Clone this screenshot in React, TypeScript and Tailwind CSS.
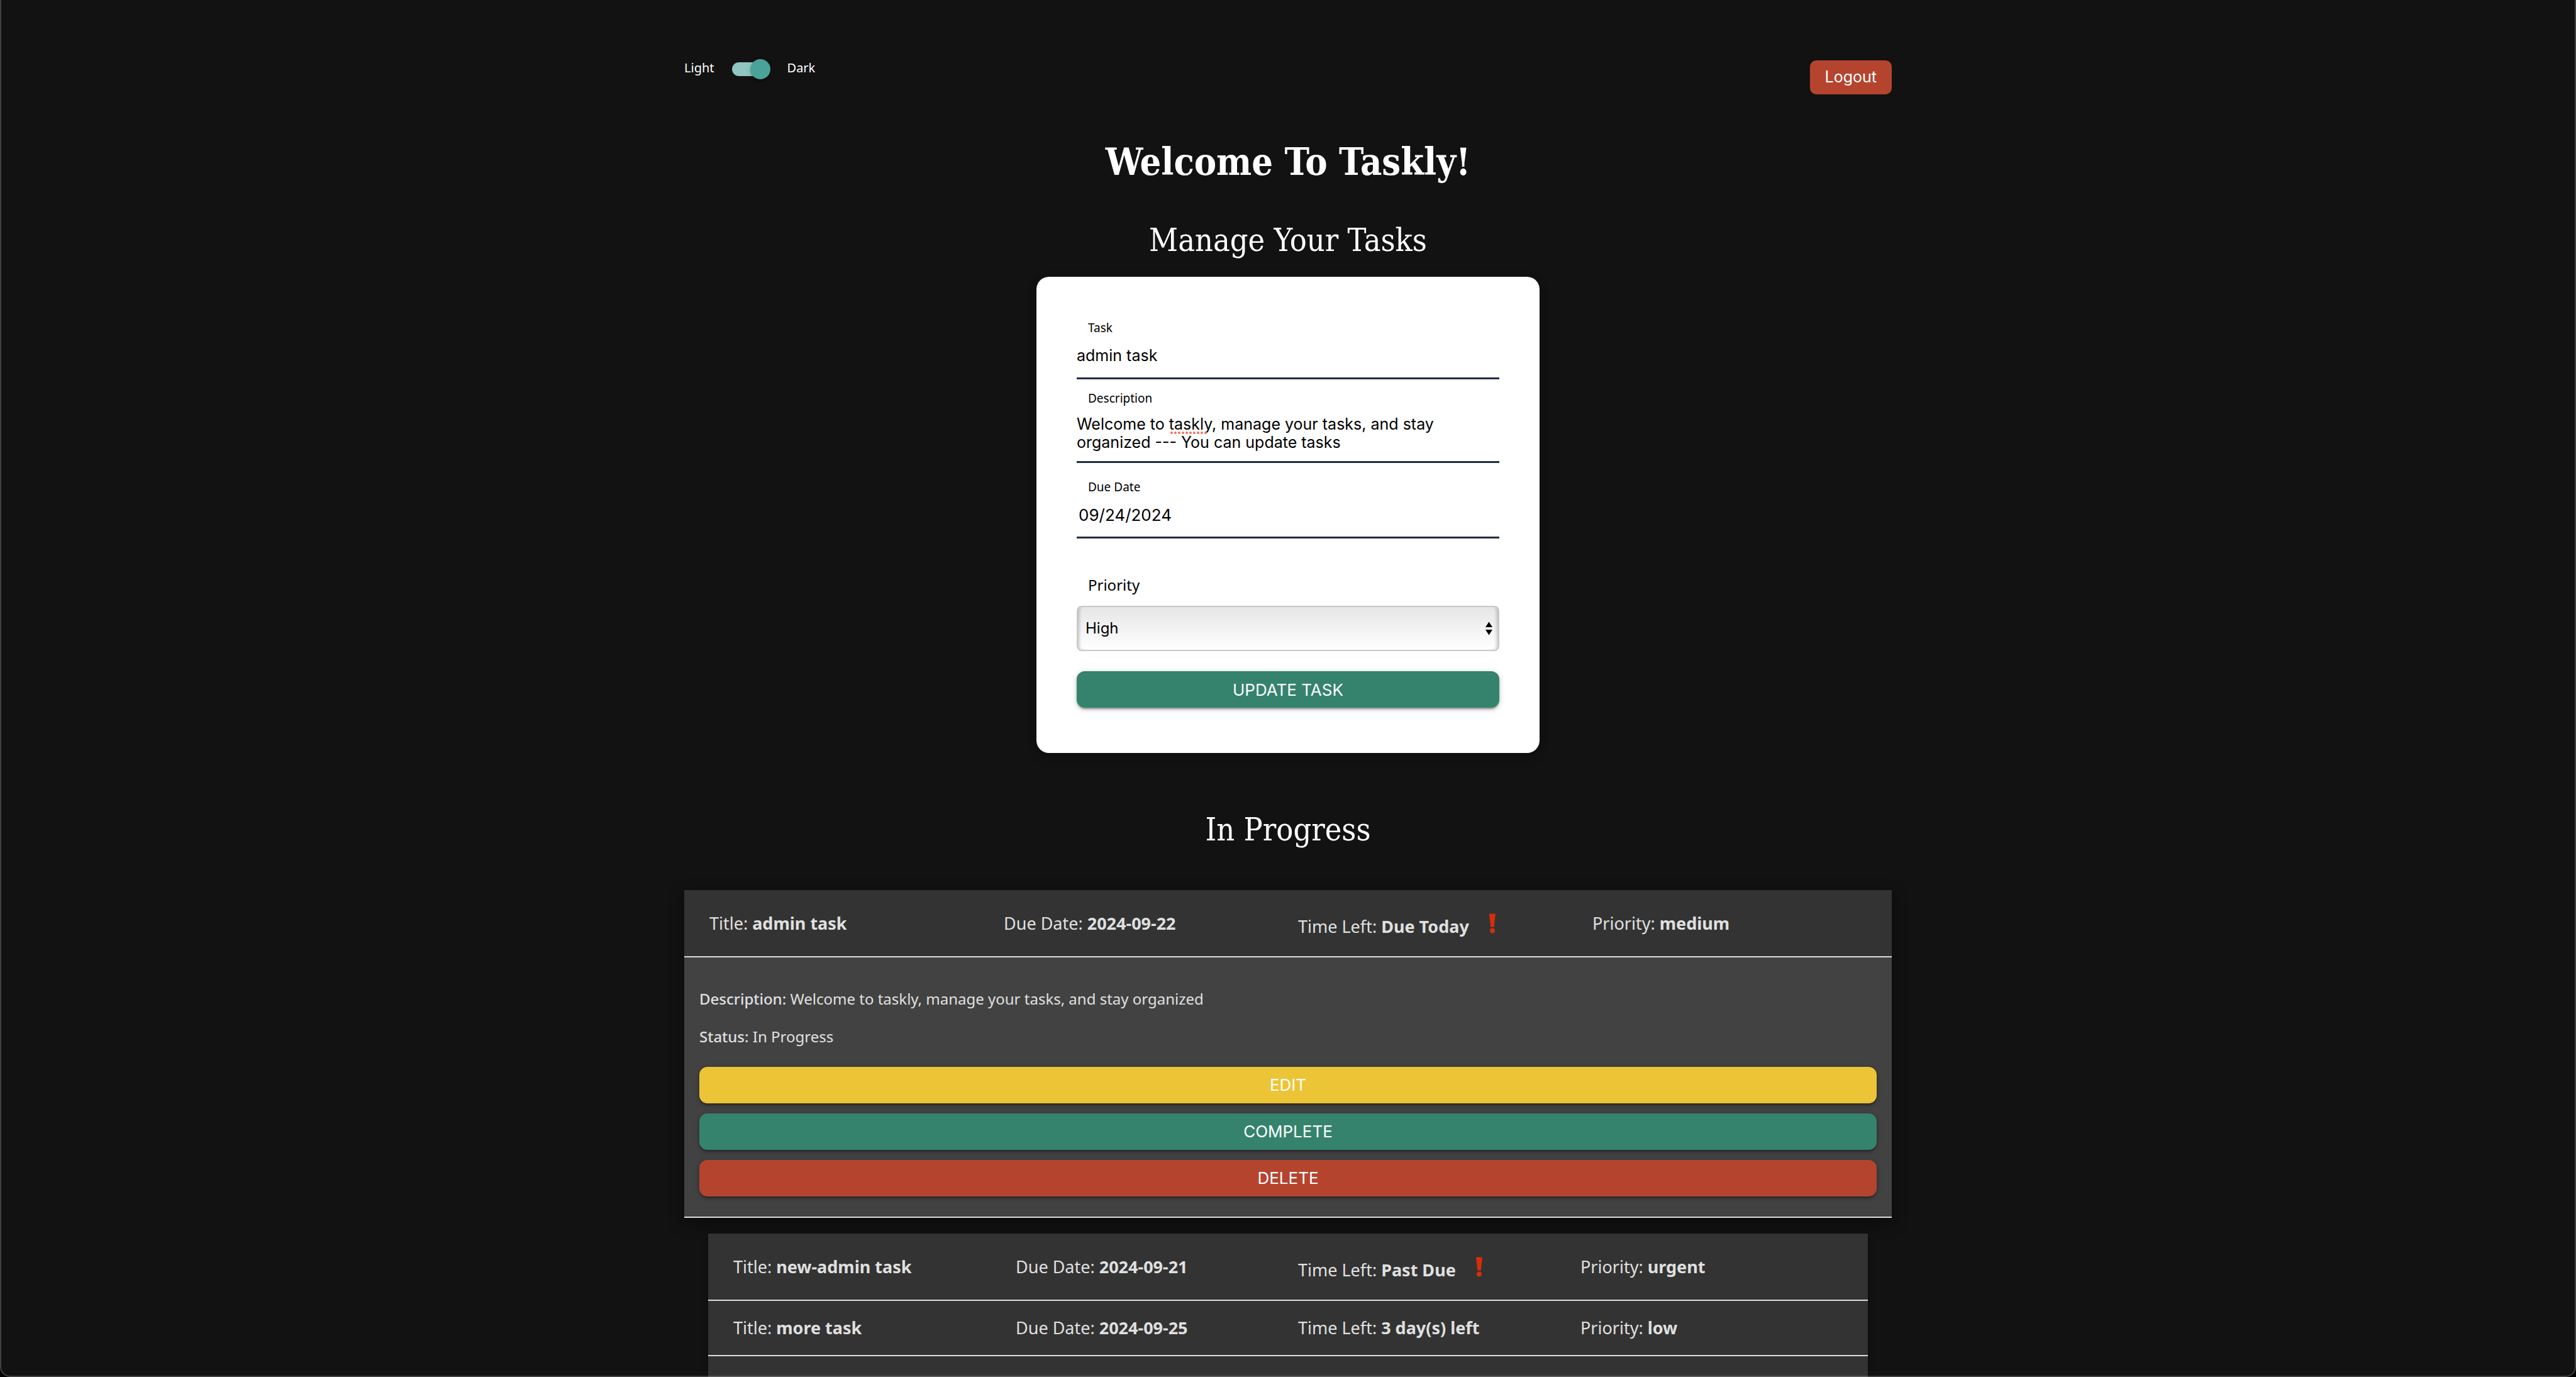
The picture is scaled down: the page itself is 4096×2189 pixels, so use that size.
import type { ReactNode } from "react";

const raised =
  "shadow-[0_3px_3px_rgba(0,0,0,0.16),0_5px_2px_-3px_rgba(0,0,0,0.14),0_2px_8px_rgba(0,0,0,0.24)]";

function BigButton({ tone, children }: { tone: string; children: ReactNode }) {
  return (
    <button
      type="button"
      className={`h-[58px] w-full rounded-[13px] text-center font-['Inter',sans-serif] text-[26px] uppercase text-white ${raised} ${tone}`}
    >
      {children}
    </button>
  );
}

function Alert() {
  return (
    <svg viewBox="0 0 10 32" className="ml-8 h-8 w-2.5 shrink-0" fill="#d62d0b" role="img" aria-label="Attention">
      <path d="M0 0.5H10L7.7 21.8H2.3Z" />
      <circle cx="5" cy="27.5" r="4" />
    </svg>
  );
}

type Task = { title: string; due: string; left: string; priority: string; alert?: boolean };

function TaskHeader({ task }: { task: Task }) {
  return (
    <div className="grid grid-cols-4 items-center border-b-2 border-[#dddddd] bg-[#333333] px-6 py-6 text-[27px] leading-[38px] whitespace-nowrap">
      <div className="px-4">
        Title: <b>{task.title}</b>
      </div>
      <div className="px-4">
        Due Date: <b>{task.due}</b>
      </div>
      {task.alert ? (
        <div className="flex h-[57px] items-center px-4">
          <span className="pt-2.5">
            Time Left: <b>{task.left}</b>
          </span>
          <Alert />
        </div>
      ) : (
        <div className="px-4">
          Time Left: <b>{task.left}</b>
        </div>
      )}
      <div className="px-4">
        Priority: <b>{task.priority}</b>
      </div>
    </div>
  );
}

const openTask: Task = { title: "admin task", due: "2024-09-22", left: "Due Today", priority: "medium", alert: true };
const otherTasks: Task[] = [
  { title: "new-admin task", due: "2024-09-21", left: "Past Due", priority: "urgent", alert: true },
  { title: "more task", due: "2024-09-25", left: "3 day(s) left", priority: "low" },
];

const slab = "font-['Roboto_Slab','DejaVu_Serif_Condensed','DejaVu_Serif',serif]";

export default function App() {
  return (
    <div className="h-screen bg-black">
      <div className="relative flex h-full flex-col overflow-hidden rounded-b-[16px] bg-[#121212] font-['Noto_Sans',sans-serif] text-white">
        <main className="mx-auto flex min-h-0 w-full max-w-[1920px] flex-1 flex-col pt-24">
          <header className="flex items-start justify-between">
            <label className="flex items-center text-[20px] leading-8">
              <span className="-mt-1">Light</span>
              <input
                type="checkbox"
                role="switch"
                defaultChecked
                className="relative mr-[30px] ml-7 h-[22px] w-[58px] appearance-none rounded-full bg-[#90c5c0] before:absolute before:-top-[5px] before:left-[29px] before:size-8 before:rounded-full before:bg-[#4aa399] before:shadow-[0_5px_2px_-3px_rgba(0,0,0,0.2),0_3px_3px_rgba(0,0,0,0.14),0_2px_8px_rgba(0,0,0,0.12)]"
              />
              <span className="-mt-1">Dark</span>
            </label>
            <button
              type="button"
              className="h-[54px] rounded-[10px] bg-[#b5442f] px-6 font-['Inter',sans-serif] text-[25px]"
            >
              Logout
            </button>
          </header>

          <h1 className={`mt-[68px] text-center text-[59px] leading-[80px] font-bold ${slab}`}>Welcome To Taskly!</h1>
          <h2 className={`mt-[54px] text-center text-[50px] leading-[60px] ${slab}`}>Manage Your Tasks</h2>

          <form className="mx-auto mt-7 w-[800px] rounded-[20px] bg-white px-16 pt-[68px] pb-[72px] text-black shadow-[0_6px_16px_rgba(0,0,0,0.3)]">
            <label htmlFor="task" className="block px-[18px] text-[19px] leading-[26px]">
              Task
            </label>
            <input
              id="task"
              defaultValue="admin task"
              className="block h-[69px] w-full border-b-[3px] border-[#202b40] pb-1 font-['Inter',sans-serif] text-[25px] outline-none"
            />
            <label htmlFor="description" className="mt-[17px] block px-[18px] text-[19px] leading-[26px]">
              Description
            </label>
            <div className="relative">
              <textarea
                id="description"
                spellCheck={false}
                defaultValue="Welcome to taskly, manage your tasks, and stay organized --- You can update tasks"
                className="block h-[90px] w-full resize-none overflow-hidden border-b-[3px] border-[#202b40] pt-[14px] pr-16 font-['Inter',sans-serif] text-[25px] leading-[29px] outline-none"
              />
              <svg className="absolute top-[40px] left-[149px] h-1 w-[64px]" viewBox="0 0 64 4" aria-hidden="true">
                <path d="M2 2H62" stroke="#f2705f" strokeWidth="4" strokeLinecap="round" strokeDasharray="0 6" />
              </svg>
            </div>
            <label htmlFor="due" className="mt-[25px] block px-[18px] text-[19px] leading-[26px]">
              Due Date
            </label>
            <input
              id="due"
              defaultValue="09/24/2024"
              className="block h-[69px] w-full border-b-[3px] border-[#202b40] px-[3px] pb-1 font-['Inter',sans-serif] text-[26px] outline-none"
            />
            <label htmlFor="priority" className="mt-[58px] block px-[18px] text-[24px] leading-8">
              Priority
            </label>
            <div className="relative mt-[17px]">
              <select
                id="priority"
                defaultValue="High"
                className="block h-[72px] w-full appearance-none rounded-[8px] border-2 border-[#c8c8c8] bg-linear-to-b from-[#e6e6e6] to-white px-3 font-['Inter',sans-serif] text-[24px] shadow-[inset_6px_0_5px_-4px_rgba(0,0,0,0.22),inset_-6px_0_5px_-4px_rgba(0,0,0,0.22)]"
              >
                <option>High</option>
              </select>
              <svg
                className="pointer-events-none absolute top-[25px] right-[11px] h-[22px] w-[11px]"
                viewBox="0 0 11 22"
                aria-hidden="true"
              >
                <path d="M5.5 0.5L11 9H0ZM5.5 21.5L11 13H0Z" />
              </svg>
            </div>
            <div className="mt-8">
              <BigButton tone="bg-[#35836d]">Update Task</BigButton>
            </div>
          </form>

          <h2 className={`mt-[92px] text-center text-[50px] leading-[60px] ${slab}`}>In Progress</h2>

          <section className="mt-[66px] text-[#e0e0e0] shadow-[0_8px_24px_rgba(0,0,0,0.45)]">
            <TaskHeader task={openTask} />
            <div className="border-b-2 border-[#dddddd] bg-[#424242] px-6 pt-[48px] pb-8 text-[24px] leading-[36px]">
              <p>
                <span className="font-medium">Description:</span> Welcome to taskly, manage your tasks, and stay organized
              </p>
              <p className="mt-6">
                <span className="font-medium">Status:</span> In Progress
              </p>
              <div className="mt-[30px] flex flex-col gap-4">
                <BigButton tone="bg-[#ecc537]">Edit</BigButton>
                <BigButton tone="bg-[#35836d]">Complete</BigButton>
                <BigButton tone="bg-[#b5442f]">Delete</BigButton>
              </div>
            </div>
          </section>

          <section className="mx-[38px] mt-[25px] flex min-h-0 flex-1 flex-col bg-[#333333] text-[#e0e0e0] shadow-[0_3px_8px_rgba(0,0,0,0.4)]">
            {otherTasks.map((task) => (
              <TaskHeader key={task.title} task={task} />
            ))}
          </section>
        </main>
        <div className="pointer-events-none absolute inset-0 rounded-b-[16px] border-x-2 border-b-2 border-white/20" />
      </div>
    </div>
  );
}
